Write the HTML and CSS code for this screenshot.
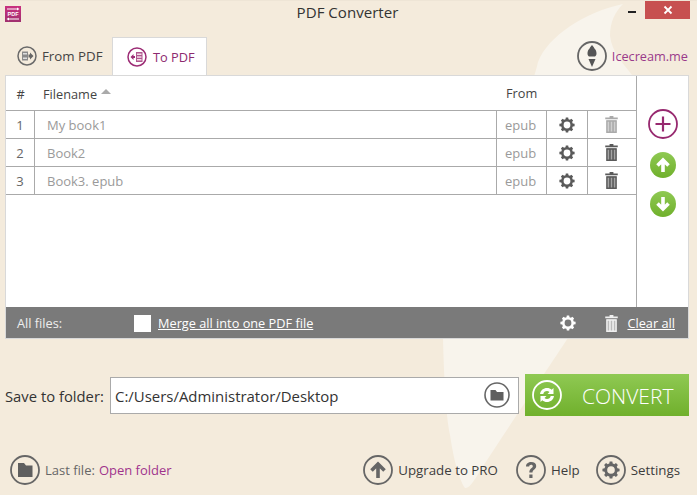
FILE: index.html
```html
<!DOCTYPE html>
<html lang="en">
<head>
<meta charset="utf-8">
<title>PDF Converter</title>
<link rel="stylesheet" href="styles.css">
</head>
<body>
<svg class="swoosh" width="697" height="495" viewBox="0 0 697 495" aria-hidden="true"><path d="M623 4C585 12 548 36 538 62C530 100 480 200 443 338C444 380 446 415 450 435C453 455 458 478 465 488C470 489 476 477 482 468C510 425 550 365 568 338L660 200L632 75C622 62 612 52 610 36C610 22 615 12 623 4Z" fill="#f8f4ec"/></svg>
<div class="app">
  <header class="titlebar">
    <svg class="logo" width="16" height="16" viewBox="0 0 16 16"><defs><linearGradient id="lg" x1="0" y1="0" x2="0" y2="1"><stop offset="0" stop-color="#c9307f"/><stop offset="1" stop-color="#a0306f"/></linearGradient></defs><rect width="16" height="16" fill="url(#lg)"/><path d="M2 3h10M4 13h10" stroke="#fff" stroke-width="1"/><path d="M12 1.500l2.500 1.500-2.500 1.500zM4 11.500L1.500 13 4 14.500z" fill="#fff"/><text x="8" y="10.300" text-anchor="middle" class="logotext">PDF</text></svg>
    <h1 class="title">PDF Converter</h1>
    <div class="winbtns">
      <span class="minimize"></span>
      <span class="close"><svg width="10" height="10" viewBox="0 0 10 10"><path d="M1.500 1.500l7 7M8.500 1.500l-7 7" stroke="#fff" stroke-width="1.800"/></svg></span>
    </div>
  </header>

  <nav class="tabs">
    <div class="tab">
      <svg class="ic20" viewBox="0 0 20 20"><circle cx="10" cy="10" r="9" fill="none" stroke="#6a6a6a" stroke-width="1.500"/><rect x="5" y="5.500" width="6" height="9" fill="#8a8a8a"/><rect x="6" y="7" width="4" height="1.500" fill="#ddd"/><rect x="6" y="11.500" width="4" height="1.500" fill="#ddd"/><path d="M11.500 8.500h1.500V6.500l3.500 3.500-3.500 3.500v-2h-1.500z" fill="#666"/></svg>
      <span>From PDF</span>
    </div>
    <div class="tab active">
      <svg class="ic20" viewBox="0 0 20 20"><circle cx="10" cy="10" r="9" fill="none" stroke="#9c2c75" stroke-width="1.500"/><path d="M3.500 10l3-3v2h1.500v2H6.500v2z" fill="#9c2c75"/><rect x="9" y="5" width="6.500" height="10" fill="#b0578f"/><rect x="10" y="6.500" width="4.500" height="1.500" fill="#f3dbe8"/><rect x="10" y="9.300" width="4.500" height="1.500" fill="#f3dbe8"/><rect x="10" y="12" width="4.500" height="1.500" fill="#f3dbe8"/></svg>
      <span>To PDF</span>
    </div>
    <a class="brand">
      <svg class="ic30" viewBox="0 0 30 30"><circle cx="15" cy="15" r="14" fill="none" stroke="#666" stroke-width="1.800"/><path d="M15 4c1.200 1.500 2.200 2.600 2.800 4 1.200.8 1.700 2.800 1.700 4.500 0 1.300-.6 2.500-1.500 3H12c-.9-.5-1.500-1.700-1.500-3 0-1.700.5-3.700 1.700-4.500C12.800 6.600 13.800 5.500 15 4z" fill="#555"/><path d="M11.500 18h7L15 26z" fill="#555"/></svg>
      <span>Icecream.me</span>
    </a>
  </nav>

  <main class="panel">
    <div class="listarea">
      <div class="list">
        <div class="thead">
          <span class="h-num">#</span>
          <span class="h-name">Filename<i class="sort"></i></span>
          <span class="h-from">From</span>
        </div>
        <div class="row">
          <span class="cell c-num">1</span>
          <span class="cell c-name">My book1</span>
          <span class="cell c-ext">epub</span>
          <span class="cell c-gear"><svg class="gear" viewBox="0 0 16 16"><use href="#gear"/></svg></span>
          <span class="cell c-bin"><svg class="bin faded" viewBox="0 0 12 16"><use href="#bin"/></svg></span>
        </div>
        <div class="row">
          <span class="cell c-num">2</span>
          <span class="cell c-name">Book2</span>
          <span class="cell c-ext">epub</span>
          <span class="cell c-gear"><svg class="gear" viewBox="0 0 16 16"><use href="#gear"/></svg></span>
          <span class="cell c-bin"><svg class="bin" viewBox="0 0 12 16"><use href="#bin"/></svg></span>
        </div>
        <div class="row">
          <span class="cell c-num">3</span>
          <span class="cell c-name">Book3. epub</span>
          <span class="cell c-ext">epub</span>
          <span class="cell c-gear"><svg class="gear" viewBox="0 0 16 16"><use href="#gear"/></svg></span>
          <span class="cell c-bin"><svg class="bin" viewBox="0 0 12 16"><use href="#bin"/></svg></span>
        </div>
      </div>
      <aside class="side">
        <svg class="ic30" viewBox="0 0 30 30"><circle cx="15" cy="15" r="14" fill="none" stroke="#97296f" stroke-width="1.800"/><path d="M15 7.500v15M7.500 15h15" stroke="#97296f" stroke-width="2.200"/></svg>
        <svg class="round" viewBox="0 0 26 26"><circle cx="13" cy="13" r="13" fill="url(#gr)"/><path d="M13 20V8M7.500 13.500L13 8l5.500 5.500" fill="none" stroke="#fff" stroke-width="3.600"/></svg>
        <svg class="round" viewBox="0 0 26 26"><circle cx="13" cy="13" r="13" fill="url(#gr)"/><path d="M13 6v12M7.500 12.500L13 18l5.500-5.500" fill="none" stroke="#fff" stroke-width="3.600"/></svg>
      </aside>
    </div>
    <div class="allbar">
      <span class="all-label">All files:</span>
      <span class="check"></span>
      <a class="merge">Merge all into one PDF file</a>
      <svg class="gear allgear" viewBox="0 0 16 16"><use href="#gear"/></svg>
      <svg class="bin allbin" viewBox="0 0 12 16"><use href="#bin"/></svg>
      <a class="clear">Clear all</a>
    </div>
  </main>

  <section class="save">
    <label class="save-label">Save to folder:</label>
    <div class="path">
      <span class="path-text">C:/Users/Administrator/Desktop</span>
      <svg class="folderbtn" viewBox="0 0 26 26"><circle cx="13" cy="13" r="12" fill="none" stroke="#666" stroke-width="1.600"/><path d="M6.500 8h5l1.500 2h6.500v8.500h-13z" fill="#5f5f5f"/></svg>
    </div>
    <button class="convert">
      <svg class="ic30" viewBox="0 0 30 30"><circle cx="15" cy="15" r="14" fill="none" stroke="#fff" stroke-width="1.800"/><path d="M8 14c.5-3.800 3.500-6 7-6 1.800 0 3.500.6 4.700 1.800L21.500 8v6h-6l2-2c-.7-.6-1.600-1-2.500-1-1.900 0-3.400 1.200-3.700 3zM22 16c-.5 3.800-3.500 6-7 6-1.800 0-3.500-.6-4.700-1.800L8.500 22v-6h6l-2 2c.7.600 1.600 1 2.500 1 1.900 0 3.400-1.200 3.700-3z" fill="#fff"/></svg>
      <span class="convert-label">CONVERT</span>
    </button>
  </section>

  <footer class="foot">
    <svg class="ic30" viewBox="0 0 30 30"><circle cx="15" cy="15" r="14" fill="none" stroke="#666" stroke-width="1.800"/><path d="M8 8h6l2 2.500h6.500V22H8z" fill="#5f5f5f"/></svg>
    <span class="last">Last file:</span>
    <a class="open">Open folder</a>
    <div class="foot-right">
      <span class="flink"><svg class="ic30" viewBox="0 0 30 30"><circle cx="15" cy="15" r="14" fill="none" stroke="#666" stroke-width="1.800"/><path d="M15 23V9.500M8.500 15.500L15 9l6.500 6.500" fill="none" stroke="#666" stroke-width="3.600"/></svg>Upgrade to PRO</span>
      <span class="flink"><svg class="ic30" viewBox="0 0 30 30"><circle cx="15" cy="15" r="14" fill="none" stroke="#666" stroke-width="1.800"/><path d="M10 11.500c0-3 2.300-4.500 5.200-4.500 3 0 5 1.600 5 4 0 3.500-3.700 3.500-3.700 6.500h-3.200c0-4.300 3.500-4.300 3.500-6.300 0-1-.7-1.500-1.700-1.500-1.100 0-1.900.7-1.900 1.800zM13.300 19.500h3.200V23h-3.200z" fill="#666"/></svg>Help</span>
      <span class="flink"><svg class="ic30" viewBox="0 0 30 30"><circle cx="15" cy="15" r="14" fill="none" stroke="#666" stroke-width="1.800"/><svg x="6" y="6" width="18" height="18" viewBox="0 0 16 16"><use href="#gear"/></svg></svg>Settings</span>
    </div>
  </footer>
</div>

<svg class="defs" width="0" height="0" aria-hidden="true">
  <defs>
    <linearGradient id="gr" x1="0" y1="0" x2="0" y2="1"><stop offset="0" stop-color="#8fc953"/><stop offset="1" stop-color="#70b02c"/></linearGradient>
    <symbol id="gear" viewBox="0 0 16 16"><path fill-rule="evenodd" d="M6.800.4h2.400l.3 1.800c.5.100 1 .3 1.400.6l1.500-1 1.700 1.700-1 1.500c.3.400.5.900.6 1.400l1.900.4v2.400l-1.900.3c-.1.500-.3 1-.6 1.400l1 1.600-1.700 1.700-1.500-1c-.4.300-.9.500-1.400.6l-.3 1.800H6.800l-.3-1.800c-.5-.1-1-.3-1.400-.6l-1.500 1-1.700-1.700 1-1.600c-.3-.4-.5-.9-.6-1.400L.4 9.200V6.800l1.900-.4c.1-.5.3-1 .6-1.400l-1-1.500 1.700-1.700 1.500 1c.4-.3.900-.5 1.400-.6zM8 4.600a3.400 3.400 0 1 0 0 6.800 3.400 3.400 0 0 0 0-6.800z" fill="currentColor"/></symbol>
    <symbol id="bin" viewBox="0 0 12 16"><rect x="1.500" y="4" width="9" height="11.500" fill="currentColor" opacity=".55"/><path fill-rule="evenodd" d="M4.200 0h3.600v1.300H12V3H0V1.300h4.200zM1 4h10v12H1zM2.400 5.300v9.400h1.400V5.300zM5.300 5.300v9.400h1.400V5.300zM8.200 5.300v9.400h1.400V5.300z" fill="currentColor"/></symbol>
  </defs>
</svg>
</body>
</html>
```

FILE: styles.css
```css
* { box-sizing: border-box; }
html, body { margin: 0; padding: 0; }
body {
  width: 697px;
  height: 495px;
  overflow: hidden;
  background: #f4ebdc;
  font-family: "Open Sans", "Noto Sans", sans-serif;
  font-size: 13px;
  color: #3c3c3c;
  position: relative;
}
a { color: inherit; }
.swoosh { position: absolute; left: 0; top: 0; }
.defs { position: absolute; }
.app { position: relative; display: flex; flex-direction: column; height: 495px; }

.titlebar { height: 37px; display: flex; align-items: flex-start; position: relative; border-top: 1px solid #eee5d6; }
.logo { margin: 5px 0 0 5px; }
.logotext { font-family: "Liberation Sans", sans-serif; font-size: 5.500px; font-weight: 700; fill: #fff; }
.title { position: absolute; left: 0; right: 2px; top: 1px; margin: 0; text-align: center; font-size: 15.100px; font-weight: 400; line-height: 20px; color: #333; }
.winbtns { margin-left: auto; margin-right: 7px; display: flex; align-items: flex-start; }
.minimize { width: 8px; height: 2px; background: #222; margin: 10px 9px 0 0; }
.close { width: 45px; height: 18px; background: #c75050; display: flex; align-items: center; justify-content: center; }

.tabs { height: 38px; display: flex; align-items: stretch; padding-left: 5px; padding-right: 9px; }
.tab { display: flex; align-items: center; gap: 5px; padding: 0 0 0 12px; width: 107px; font-size: 13.300px; color: #444; }
.tab.active { width: 95px; padding-left: 14px; gap: 6px; font-size: 12.800px; background: #fff; border: 1px solid #d9d9d9; border-bottom: 0; color: #8d2a70; }
.ic20 { width: 20px; height: 20px; flex: none; }
.ic30 { width: 30px; height: 30px; flex: none; }
.brand { margin-left: auto; display: flex; align-items: center; gap: 5px; color: #9a3a8a; font-size: 12.700px; }

.panel { height: 264px; margin: 0 8px 0 5px; background: #fff; border: 1px solid #d9d9d9; display: flex; flex-direction: column; }
.listarea { flex: 1; display: flex; min-height: 0; }
.list { width: 631px; border-right: 1px solid #aaa; }
.thead { height: 35px; display: flex; align-items: center; padding-top: 1px; font-size: 12.750px; color: #444; border-bottom: 1px solid #aaa; }
.h-num { width: 29px; text-align: center; }
.h-name { flex: 1; display: flex; align-items: center; padding-left: 8px; }
.h-from { width: 138px; padding: 0 0 2px 8px; }
.sort { display: inline-block; margin: -4px 0 0 4px; border: 5px solid transparent; border-top: 0; border-bottom: 5px solid #aaa; }
.row { height: 28px; display: flex; border-bottom: 1px solid #aaa; color: #9a9a9a; font-size: 13px; }
.cell { display: flex; align-items: center; border-right: 1px solid #aaa; }
.c-num { width: 29px; justify-content: center; color: #666; }
.c-name { flex: 1; padding-left: 12px; }
.c-ext { width: 50px; justify-content: center; padding-right: 2px; font-size: 13px; }
.c-gear { width: 41px; justify-content: center; }
.c-bin { width: 48px; justify-content: center; padding-right: 2px; border-right: 0; }
.gear { width: 16px; height: 16px; color: #5a5a5a; }
.bin { width: 13px; height: 17px; color: #5a5a5a; }
.bin.faded { color: #aaa; }
.side { flex: 1; display: flex; flex-direction: column; align-items: center; padding-top: 33px; gap: 13px; }
.round { width: 26px; height: 26px; }

.allbar { height: 31px; background: #7a7a7a; color: #fff; display: flex; align-items: center; padding: 1px 13px 0 11px; font-size: 12.750px; }
.all-label { color: #eee; width: 117px; }
.check { width: 17px; height: 17px; background: #fff; margin-right: 7px; }
.merge { text-decoration: underline; }
.allgear { margin-left: auto; color: #fff; }
.allbin { margin-left: 29px; color: #f0f0f0; }
.clear { text-decoration: underline; margin-left: 9px; }

.save { display: flex; align-items: center; margin-top: 35px; padding-left: 5px; height: 42px; }
.save-label { width: 105px; padding-top: 2px; font-size: 14.800px; color: #333; }
.path { width: 409px; height: 37px; background: #fff; border: 1px solid #aaa; display: flex; align-items: center; padding: 0 8px 0 4px; font-size: 14.950px; color: #333; }
.path-text { flex: 1; padding-top: 2px; }
.folderbtn { width: 26px; height: 26px; }
.convert { margin-left: 6px; width: 164px; height: 42px; border: 0; padding: 0 0 0 7px; background: linear-gradient(#8fc953, #70b02c); color: #fff; display: flex; align-items: center; gap: 20px; font-family: inherit; font-size: 21px; font-weight: 300; }
.convert-label { padding-top: 2px; }

.foot { display: flex; align-items: center; margin-top: 39px; padding: 0 17px 0 10px; height: 30px; font-size: 13px; }
.last { margin-left: 5px; color: #666; }
.open { margin-left: 4px; color: #a0338c; }
.foot-right { margin-left: auto; display: flex; gap: 16px; font-size: 13.300px; }
.flink { display: flex; align-items: center; gap: 5px; color: #3c3c3c; }
.flink:first-child { margin-right: 2px; }
.flink svg { color: #666; }
```
